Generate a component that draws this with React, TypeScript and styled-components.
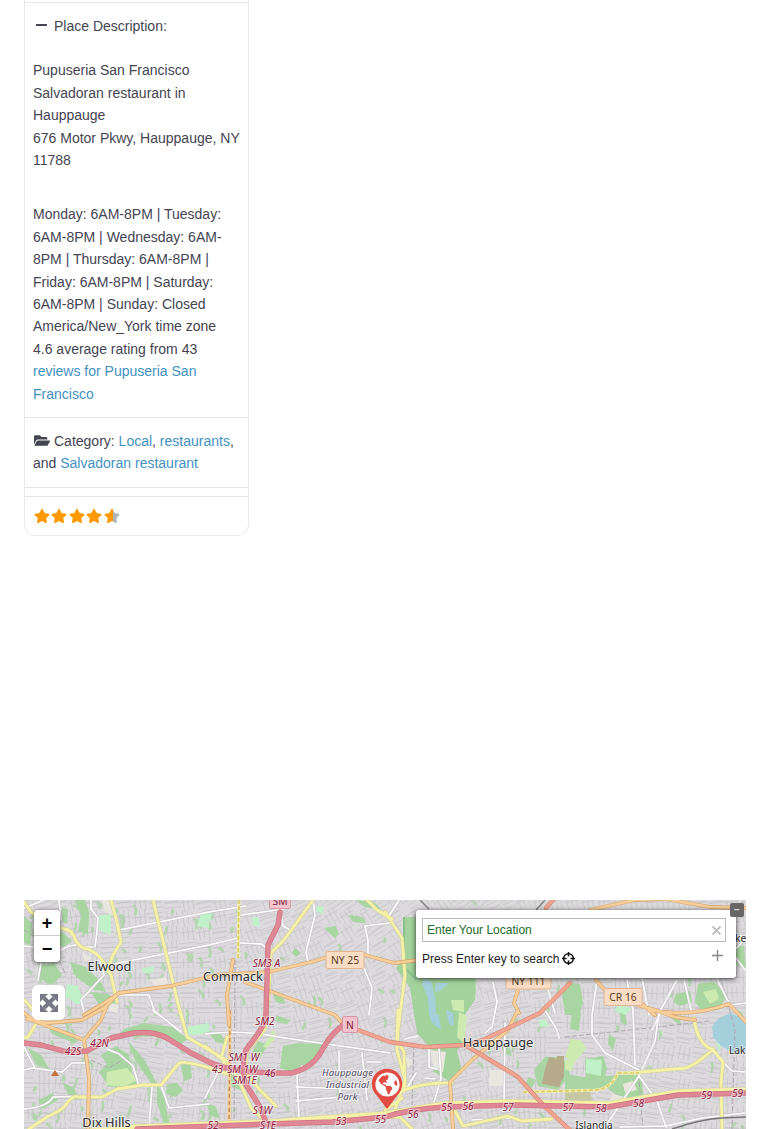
import React from "react";
import styled, { createGlobalStyle } from "styled-components";
import { FaFolderOpen, FaGlobeAmericas, FaStar } from "react-icons/fa";

const GlobalStyle = createGlobalStyle`
  body {
    margin: 0;
    background: #fff;
    font-family: "Liberation Sans", Arial, sans-serif;
    overflow-x: hidden;
  }
`;

const Page = styled.main`
  display: flex;
  flex-direction: column;
  justify-content: space-between;
  box-sizing: border-box;
  height: 1129px;
  padding: 0 24px;
  overflow: hidden;
`;

const Card = styled.article`
  box-sizing: border-box;
  width: 225px;
  height: 536px;
  border: 1px solid #e9ebee;
  border-top: 0;
  border-radius: 0 0 12px 12px;
  color: #444452;
  font-size: 14px;
  line-height: 22.4px;
`;

const CardSection = styled.section<{ $height: number; $top?: number }>`
  box-sizing: border-box;
  height: ${(p) => p.$height}px;
  padding: ${(p) => p.$top ?? 0}px 0 0 8px;
  border-bottom: 1px solid #e4e6e9;
`;

const FieldTitle = styled.div`
  display: flex;
  align-items: center;
  gap: 7px;
  padding-left: 3px;
`;

const Paragraph = styled.p<{ $gap: number }>`
  margin: ${(p) => p.$gap}px 0 0;
  white-space: nowrap;
`;

const Link = styled.a`
  color: #4391bf;
`;

const FolderIcon = styled(FaFolderOpen)`
  width: 16px;
  height: 15px;
  margin: 0 4px 0 1px;
  vertical-align: -2px;
`;

const Rating = styled.div`
  display: flex;
  gap: 1.4px;
  padding: 11px 0 0 9px;
`;

const Star = styled(FaStar)<{ $part?: boolean }>`
  width: 16px;
  height: 16px;
  fill: ${(p) => (p.$part ? "url(#partStar)" : "#ff9900")};
`;

const MapFrame = styled.section`
  position: relative;
  height: 229px;
  overflow: hidden;
  background: #dcdadc;
`;

const MapDrawing = styled.svg`
  display: block;
  width: 722px;
  height: 229px;
`;

const ZoomControl = styled.div`
  position: absolute;
  top: 10px;
  left: 10px;
  width: 26px;
  height: 52px;
  border-radius: 4px;
  background: #fff;
  box-shadow: 0 1px 5px rgba(0, 0, 0, 0.65);
`;

const ZoomButton = styled.button`
  display: flex;
  align-items: center;
  justify-content: center;
  box-sizing: border-box;
  width: 26px;
  height: 26px;
  padding: 0;
  border: 0;
  background: none;
  color: #000;
  font: bold 18px/24px "Liberation Sans", sans-serif;

  &:first-child {
    border-bottom: 1px solid #ccc;
  }
`;

const FullscreenButton = styled.button`
  position: absolute;
  top: 85px;
  left: 8px;
  display: flex;
  align-items: center;
  justify-content: center;
  width: 33px;
  height: 35px;
  padding: 0;
  border: 0;
  border-radius: 6px;
  background: #fff;
`;

const SearchPanel = styled.div`
  position: absolute;
  top: 10px;
  left: 392px;
  box-sizing: border-box;
  width: 320px;
  height: 68px;
  padding: 8px 10px 0 6px;
  border-radius: 3px;
  background: #fff;
  box-shadow: 0 1px 5px rgba(0, 0, 0, 0.75);
  color: #222;
  font-size: 12px;
`;

const SearchField = styled.div`
  display: flex;
  align-items: center;
  justify-content: space-between;
  box-sizing: border-box;
  height: 24px;
  padding: 0 4px;
  border: 1px solid #bbb;
  color: #1d6b2b;
`;

const SearchHint = styled.div`
  display: flex;
  align-items: center;
  justify-content: space-between;
  height: 33px;
`;

const HintText = styled.span`
  display: flex;
  align-items: center;
  gap: 3px;
`;

const PlusIcon = styled.svg`
  margin: -7px 2px 0 0;
`;

const CollapseButton = styled.button`
  position: absolute;
  top: 3px;
  right: 2px;
  width: 14px;
  height: 14px;
  padding: 0;
  border: 0;
  border-radius: 2px;
  background: #666;
  color: #ddd;
  font: bold 10px/12px "Liberation Sans", sans-serif;
`;

const Marker = styled.div`
  position: absolute;
  top: 168px;
  left: 347px;
  width: 32px;
  height: 42px;
`;

const MarkerGlobe = styled(FaGlobeAmericas)`
  position: absolute;
  top: 3.5px;
  left: 3.5px;
  width: 25px;
  height: 25px;
  color: #fff;
`;

let seed = 41;
const rnd = () => {
  seed = (seed * 16807) % 2147483647;
  return seed / 2147483647;
};

// Small residential streets, laid out block by block from a fixed seed
const buildStreets = () => {
  let d = "";
  for (let y = 896; y < 1135; y += 15) {
    for (let x = 20; x < 750; x += 16) {
      const angle = -0.2 + Math.sin(x / 83) * 0.25 + Math.cos(y / 57) * 0.15;
      const c = Math.cos(angle);
      const s = Math.sin(angle);
      const turned = rnd() > 0.5;
      for (let i = 0; i < 3; i++) {
        const o = i * 4.8 - 5;
        const len = 5 + rnd() * 4;
        const [ux, uy] = turned ? [c, s] : [-s, c];
        const [vx, vy] = [-uy, ux];
        const px = x + 8 + vx * o;
        const py = y + 7 + vy * o;
        d += `M${(px - ux * len).toFixed(1)} ${(py - uy * len).toFixed(1)}L${(px + ux * len).toFixed(1)} ${(py + uy * len).toFixed(1)}`;
      }
      d += `M${x} ${y + 7}l${(c * 15).toFixed(1)} ${(s * 15).toFixed(1)}`;
    }
  }
  return d;
};

// Thin wooded strips between the blocks, denser to the south-west
const buildStrips = () => {
  let d = "";
  for (let i = 0; i < 210; i++) {
    const x = i < 110 ? 24 + rnd() * 190 : 24 + rnd() * 722;
    const y = 900 + rnd() * 229;
    const dx = (rnd() - 0.5) * 9;
    const dy = 3 + rnd() * 8;
    d += `M${x.toFixed(1)} ${y.toFixed(1)}q${(dx + 3).toFixed(1)} ${(dy / 2).toFixed(1)} ${dx.toFixed(1)} ${dy.toFixed(1)}`;
  }
  return d;
};

const streets = buildStreets();
const strips = buildStrips();

const areas = [
  { fill: "#a8d5a2", d: "M75 900l10 0 4 12-1 22-10-3 3-15zM50 929l12 3 10 9-9 6-10-6zM38 966l16-3 8 12-10 10-13-7zM70 962l16 5 15 15 5 10-13-3-17-12zM91 992l17 2 11 8-18 6zM24 916l8 7-2 22-6-3zM62 907l6 2-1 15-7-4z" },
  { fill: "#a8d5a2", d: "M101 1055l15-9 13 9 3 17 5 13-28 2-10-15 8-8zM167 1084l10-1 6 7-7 7-10-3zM124 1029l20-6 28 4 16 12-7 5-20-8-26 1-16-2zM181 1065l9-3 2 16-8 3zM46 1024l20 7 16 8-8 4-22-9zM28 1048l13 7 9 15-14-5zM62 1082l12 6 5 12-10-4zM39 1100l14-7 5 7-15 9zM128 1041l16 18 13 25-4 2-18-26zM157 1082l8 18 4 25-5 0-7-23z" },
  { fill: "#a8d5a2", d: "M283 1046l15-3 24 1 2 7-16 14-14 8-14-5zM324 928l12-2 3 8-4 4zM348 915l15 2 3 6-13-1zM355 900l19 2 8 8-17-3zM258 1041l10 4-8 12-8-5zM295 948l6 5-5 4-4-4zM273 994l10 2 2 8-9-2zM276 1015l14 5-3 4-12-3zM206 1030l14 3 8 12-12-3zM206 1102l10 5 4 12-10-4zM228 1072l8 5 6 14-10-4z" },
  { fill: "#a3d29d", d: "M404 917l13 0 0 61 59 0-1 22-12 17 2 24-8 10 5 20-13 10-16-10 2-18-18-20-7-45-14-20 8-9z" },
  { fill: "#a8d5a2", d: "M566 982l14 2 3 20-4 11-14 0-3-20zM676 994l14-3 2 11-12 4-7-4zM698 984l16-2 13 13-8 15-18 0-6-8zM735 945l9 1 2 24-9-5zM572 1010l9 2-2 19-9-2zM585 1059l18-3 4 12-5 21-16-5zM565 1074l18 3 36-2 22 0 3 24-25-2-12-9-42 3zM620 1011l5 0 2 14-6-2zM545 1057l18 0 7 17-12 16-20-4-4-16zM501 1044l7 0 4 12-8-2zM528 1077l8 3-4 8-6-4zM666 1012l13 7 3 7-9-6zM609 1035l7 3-3 13-5-7z" },
  { fill: "#c0f1c9", d: "M67 984l11 2 6 17-8 1-11-8zM99 916l12-2 0 21-13-5zM142 968l12-1-1 6-10 0zM201 914l8-2 0 16-12-2zM187 1027l22-4 0 11-20 1zM252 917l7 0 0 10-6-2zM317 906l7 1-1 6-7-1zM586 1059l16 1-1 16-15-3zM539 1020l7 0 3 6-9 1zM617 1005l15 3-7 7-10-4zM206 914l6-1-2 9zM716 1042l7 3-4 6z" },
  { fill: "#cdebb0", d: "M107 1072l20-4 10 12-13 7-18-2zM571 1039l11 2 4 8-12 14-9-6zM459 1012l8 4-3 27-7-6zM451 1000l13 0 0 12-11-2zM703 992l13-3 3 10-9 5zM565 1059l9 3-2 9-7-1zM110 908l4-4 0 13-7-5zM273 1030l4 6-10 12-4-1z" },
  { fill: "#a6cfdc", d: "M424 979l7 2 4 16 1 18-3 10-4-10-1-17-6-14zM436 983l13 0-9 8-5 1zM433 1013l6 2 2 14-6-3zM446 1010l7 3 1 13-5-2zM712 1026l7-8 12-5 11 5 7 10 0 22-15 3-13-7-8-9z" },
  { fill: "#b5aa89", d: "M549 1057l8 2 0-3 7 0 0 20-5 11-17-3 3-15z" },
  { fill: "#c6c7a5", d: "M565 1091l25 0 3 12-28 3z" },
  { fill: "#e9e6df", d: "M101 900l12 0 0 15-8-3zM150 980l16-3 3 8-14 1zM82 952l10 6-7 4zM430 1050l16 2-3 20-9-3zM490 1070l13 0 2 16-16 0zM623 1084l10-3 4 9-12 3zM112 1003l7 3-2 7-9-3zM613 1094l11 3-9 13-8-3zM405 1056l9 5-6 7z" },
];

const minorRoads = [
  "M119 930L209 912 246 906M114 964L209 945 238 938M91 900l0 9 7 9-1 14-2 15M24 946l20 2M61 950q15-8 20-3l12 0",
  "M104 975l-23 25 3 12M41 963l-3 17M24 908l20-8M59 900l2 20M119 995l30 0 6 18M97 952L104 975",
  "M24 1070l8-2 30 4 10-9 13 0M24 1109q24-2 29-12l35-1M107 1049l12 5 14 12 6 20M152 1087l-3 42M161 1085l8 23 40-4M153 1010l28 22M24 1047l11 21",
  "M241 915l43-6M240 943l22 1 7 7M313 900l2 15-9 37 2 9M390 923l-25 3 3 15 0 15M364 968l8 20-3 27M281 912l2 14 9 5",
  "M205 1034q35-5 80 4l105 15M205 1098l15-30M302 1066l-5 10 2 42M296 1087l55 2M296 1101l45-4M339 1051l1 50M362 1053l5 47M367 1062l14 0",
  "M493 982l4 20-5 25-7 6M545 1010l12 20 2 8M405 1039l13-3M429 1047l0 20 8 2M439 1048l2 30-8 28M505 1023l-1 84M546 983l9 30",
  "M597 980l-5 35 0 20 13 18 34 17M627 980l6 30 2 55M642 978l7 37M677 980l-18 33-4 28-16 35-34 51M684 980l8 34M639 1076l18 25 9 26M715 975l15 30 16-2M722 1061l10 10 14 1M620 1127l46-1 36-8 43-5",
  "M399 900l-10 16M744 940l-12 13 14 18M662 1010l-10 20M416 1073l-12 20M472 1120l45-2M425 1078l10 1",
];

const yellowRoads = [
  "M24 902l7 10 12 9 21 8q8 0 12 12 5 8 12 8 9 4 14 11l9 15 6 27",
  "M111 900l6 22 4 20-8 13-6 15M153 900l11 45 18 75M24 1000q12 10 13 22l-9 15-4 1",
  "M29 1129l18-12q15-7 18-11 8-12 13-9l24 0 15-8 26-4 18 0 18-22q9-3 48 11",
  "M180 1010l7 27 22 13 17 10 12 18 13 30 17 16M313 900l-29 40-13 13-3 48-3 28-18 22-2 20 14 18 17 17",
  "M367 900l10 10 15 9M385 912l17 26 3 37-7 55-1 20 8 30-12 36M398 1010l-1 30 7 12 1 37",
  "M385 1100l20-10q20-8 47-7M385 1117l15 0 12 12M630 1073l56-5q13-5 27-19M694 1018q3 26 19 32l10 12-2 20 1 47",
  "M455 1111l8 15 45-10 14 5 30-2M553 929l9 7M385 1110l17-12M205 1046l18 14 5 12M227 1037l-5 18",
];

const orangeRoads = [
  "M84 1015l17-10 18-12 52-7 46-11 51-3 47-11 12-4 38-2 29 8 25-3",
  "M245 982l90 33 7 8M233 960l-6 35 2 30",
  "M88 1129l1-52-5-37 17-20 6-15M24 1013l10 8 50 19M27 1019l20 4 35-3 22-12 15-15",
  "M518 1010l-10 20-36 30-22 22 3 47M520 983l-6 20 5 10",
  "M590 910l45-10 30-1 45 8 36 1M596 980l16 18 43 12 20 7 20 3M649 1010q40 8 80-6l17 18M635 998l20 17",
];

const salmonRoads = [
  "M342 1024l48 18 35 5 40-2 20 12 33 20 27 30 26 24",
  "M570 983l-15 15-15 15-55 26-20 7M553 900l-7 8",
];

const motorways = [
  "M280 912l-2 13-10 20-2 70q0 10-18 32-7 8-3 36l15 24 5 13",
  "M24 1043l17 2 26 7 20-1 24-13 23-5q20-2 33 5l24 15 18 9q25 12 83 11 20-5 29-21 12-22 25-28",
  "M137 1129l131-5 64-2 53-5q25-8 60-10l68-2 95 2 70-12 68-2",
];

type Label = [string, number, number];

const places: Label[] = [
  ["Elwood", 109.5, 971],
  ["Commack", 233, 981],
  ["Dix Hills", 106.5, 1126.5],
  ["Hauppauge", 498, 1046.5],
];

const exits: Label[] = [
  ["42S", 73, 1055],
  ["42N", 99.5, 1047],
  ["SM3 A", 266.5, 967],
  ["SM2", 265, 1025],
  ["SM1 W", 244, 1060.5],
  ["43", 217.5, 1072.5],
  ["SM 1W", 242.5, 1072.5],
  ["SM1E", 244.5, 1083.5],
  ["46", 270, 1077],
  ["S1W", 262.5, 1113.5],
  ["S1E", 268, 1128.5],
  ["52", 213, 1128.5],
  ["53", 341, 1125],
  ["55", 380.5, 1122.5],
  ["56", 413, 1118],
  ["55", 446.5, 1111],
  ["56", 468, 1109.5],
  ["57", 508, 1110.5],
  ["57", 568, 1110.5],
  ["58", 601, 1111.5],
  ["58", 638.5, 1106.5],
  ["59", 706.5, 1098.5],
  ["59", 737.5, 1096.5],
];

const shields = [
  { text: "NY 25", x: 326, y: 951.5, w: 38, h: 17, fill: "#f8ddc4", stroke: "#e2b692", color: "#5a3a1c" },
  { text: "NY 111", x: 506, y: 972, w: 45, h: 17, fill: "#f8ddc4", stroke: "#e2b692", color: "#5a3a1c" },
  { text: "CR 16", x: 604, y: 988.5, w: 38, h: 17, fill: "#f8ddc4", stroke: "#e2b692", color: "#5a3a1c" },
  { text: "N", x: 342.5, y: 1016.5, w: 15, h: 16, fill: "#f2c3cd", stroke: "#d796a7", color: "#7b1e3b" },
  { text: "SM", x: 269.5, y: 892.5, w: 21, h: 16, fill: "#f2c3cd", stroke: "#d796a7", color: "#7b1e3b" },
];

interface RoadsProps {
  lines: string[];
  casing: string;
  color: string;
  width: number;
}

const Roads = ({ lines, casing, color, width }: RoadsProps) => (
  <g fill="none" strokeLinejoin="round" strokeLinecap="round">
    <path d={lines.join("")} stroke={casing} strokeWidth={width + 1.2} />
    <path d={lines.join("")} stroke={color} strokeWidth={width} />
  </g>
);

const StreetMap = () => (
  <MapDrawing viewBox="24 900 722 229">
    <rect x="24" y="900" width="722" height="229" fill="#dcdadc" />
    <path d={strips} stroke="#b2d6ac" strokeWidth="2.6" fill="none" />
    <path d={streets} stroke="#c3c1c5" strokeWidth="0.7" fill="none" />
    {areas.map((area) => (
      <path key={area.d} d={area.d} fill={area.fill} />
    ))}
    <path d="M404 917l0 50 12 12" fill="none" stroke="#8bc08b" strokeWidth="2" />
    <path
      d="M24 930l30 20 12 25M91 1060l18 8 15-9M565 1037l75-8 70-8M643 1129l-4-50M414 1045l-2 60M235 960l-1 169M720 975l15 55-3 99"
      fill="none"
      stroke="#b0a9b3"
      strokeWidth="1"
      strokeDasharray="5 2"
    />
    <Roads lines={minorRoads} casing="#c9c5cb" color="#fff" width={1.6} />
    <Roads lines={yellowRoads} casing="#cfcf9f" color="#f5f2a7" width={2.8} />
    <path d="M239 900l-1 58M565 1091l30-1q16-1 23-17l21 0M523 1092l42-1" fill="none" stroke="#f0eeb0" strokeWidth="3" />
    <g fill="none" strokeDasharray="4 2" strokeWidth="1.6">
      <path d="M239 900l-1 58M565 1091l30-1q16-1 23-17l21 0M523 1092l42-1" stroke="#dccb62" />
    </g>
    <path d="M230 1010l-1 119" fill="none" stroke="#f5cf98" strokeWidth="3.4" />
    <path d="M230 1010l-1 119" fill="none" stroke="#c08b58" strokeWidth="1.4" strokeDasharray="4 3" />
    <Roads lines={["M80 1132l57-5 131-5 117-8 60-10 68-2 95 2 70-12 68-2"]} casing="#d1d0a4" color="#f5f2a7" width={5} />
    <Roads lines={orangeRoads} casing="#d7a368" color="#f8cf9b" width={2.6} />
    <Roads lines={salmonRoads} casing="#d38b78" color="#f2a391" width={3.2} />
    <Roads lines={motorways} casing="#cc7582" color="#df8795" width={4.2} />
    <g fill="none">
      <path d="M420 900l9 9M545 900l-9 10" stroke="#777" strokeWidth="1.2" />
      <path d="M672 1129q30-10 50-11l24-1" stroke="#777" strokeWidth="1.6" />
    </g>
    <path d="M51 1076l4-6 4 6z" fill="#c4733b" />
    {shields.map((s) => (
      <g key={s.text}>
        <rect x={s.x} y={s.y} width={s.w} height={s.h} rx="1.5" fill={s.fill} stroke={s.stroke} />
        <text x={s.x + s.w / 2} y={s.y + 12.5} fill={s.color} fontSize="10.3" fontFamily="Noto Sans, sans-serif" textAnchor="middle">
          {s.text}
        </text>
      </g>
    ))}
    <g
      fontFamily="Noto Sans, sans-serif"
      textAnchor="middle"
      stroke="#fff"
      strokeOpacity="0.5"
      strokeWidth="2"
      paintOrder="stroke"
    >
      <g fontSize="12.8" fill="#2d2d2d">
        {places.map(([text, x, y]) => (
          <text key={text} x={x} y={y}>
            {text}
          </text>
        ))}
        <text x="594" y="1128.5" fontSize="10.2">
          Islandia
        </text>
        <text x="729" y="1053.5" fontSize="10.2" textAnchor="start">
          Lak
        </text>
        <text x="735" y="941.5" fontSize="10.2" textAnchor="start">
          ke
        </text>
      </g>
      <g fontSize="9.6" fontStyle="italic" fill="#554e68">
        <text x="347.5" y="1076" textLength="51">
          Hauppauge
        </text>
        <text x="347.5" y="1088" textLength="43">
          Industrial
        </text>
        <text x="347.5" y="1100" textLength="20">
          Park
        </text>
      </g>
      <g fontSize="10.2" fontStyle="italic" fill="#8f1d43">
        {exits.map(([text, x, y]) => (
          <text key={text + x} x={x} y={y}>
            {text}
          </text>
        ))}
      </g>
    </g>
  </MapDrawing>
);

const PlaceCard = () => (
  <Card>
    <CardSection $height={3} />
    <CardSection $height={415} $top={12}>
      <FieldTitle>
        <svg width="11" height="12">
          <rect y="4" width="11" height="2" rx="0.6" fill="#444452" />
        </svg>
        Place Description:
      </FieldTitle>
      <Paragraph $gap={22}>
        Pupuseria San Francisco
        <br />
        Salvadoran restaurant in
        <br />
        Hauppauge
        <br />
        676 Motor Pkwy, Hauppauge, NY
        <br />
        11788
      </Paragraph>
      <Paragraph $gap={32}>
        Monday: 6AM-8PM | Tuesday:
        <br />
        6AM-8PM | Wednesday: 6AM-
        <br />
        8PM | Thursday: 6AM-8PM |
        <br />
        Friday: 6AM-8PM | Saturday:
        <br />
        6AM-8PM | Sunday: Closed
        <br />
        America/New_York time zone
        <br />
        4.6 average rating from 43
        <br />
        <Link>
          reviews for Pupuseria San
          <br />
          Francisco
        </Link>
      </Paragraph>
    </CardSection>
    <CardSection $height={70} $top={12}>
      <FolderIcon />
      Category: <Link>Local</Link>, <Link>restaurants</Link>,
      <br />
      and <Link>Salvadoran restaurant</Link>
    </CardSection>
    <CardSection $height={9} />
    <Rating>
      <Star />
      <Star />
      <Star />
      <Star />
      <Star $part />
      <svg width="0" height="0">
        <linearGradient id="partStar">
          <stop offset="60%" stopColor="#ff9900" />
          <stop offset="60%" stopColor="#afb4bb" />
        </linearGradient>
      </svg>
    </Rating>
  </Card>
);

const App = () => (
  <>
    <GlobalStyle />
    <Page>
      <PlaceCard />
      <MapFrame>
        <StreetMap />
        <Marker>
          <svg width="32" height="42">
            <path d="M16 41L5.5 27A15.2 15.2 0 1 1 26.5 27z" fill="#e04b43" />
          </svg>
          <MarkerGlobe />
        </Marker>
        <ZoomControl>
          <ZoomButton>+</ZoomButton>
          <ZoomButton>−</ZoomButton>
        </ZoomControl>
        <FullscreenButton>
          <svg width="18" height="18" viewBox="0 0 18 18">
            <path d="M4 4l10 10M14 4L4 14" stroke="#777786" strokeWidth="4" />
            <path
              d="M0 0h7.5L0 7.5zM18 0v7.5L10.5 0zM0 18v-7.5L7.5 18zM18 18h-7.5l7.5-7.5z"
              fill="#777786"
              stroke="#777786"
              strokeLinejoin="round"
            />
          </svg>
        </FullscreenButton>
        <SearchPanel>
          <SearchField>
            Enter Your Location
            <svg width="9" height="9">
              <path d="M0.5 0.5l8 8M8.5 0.5l-8 8" stroke="#bbb" strokeWidth="1.8" />
            </svg>
          </SearchField>
          <SearchHint>
            <HintText>
              Press Enter key to search
              <svg width="13" height="13" fill="none" stroke="#111" strokeWidth="1.5">
                <circle cx="6.5" cy="6.5" r="4.8" />
                <path d="M6.5 0v4.5M6.5 8.5v4.5M0 6.5h4.5M8.5 6.5h4.5" />
              </svg>
            </HintText>
            <PlusIcon width="13" height="13">
              <path d="M6.5 1v11M1 6.5h11" stroke="#888" strokeWidth="1.4" />
            </PlusIcon>
          </SearchHint>
        </SearchPanel>
        <CollapseButton>−</CollapseButton>
      </MapFrame>
    </Page>
  </>
);

export default App;
